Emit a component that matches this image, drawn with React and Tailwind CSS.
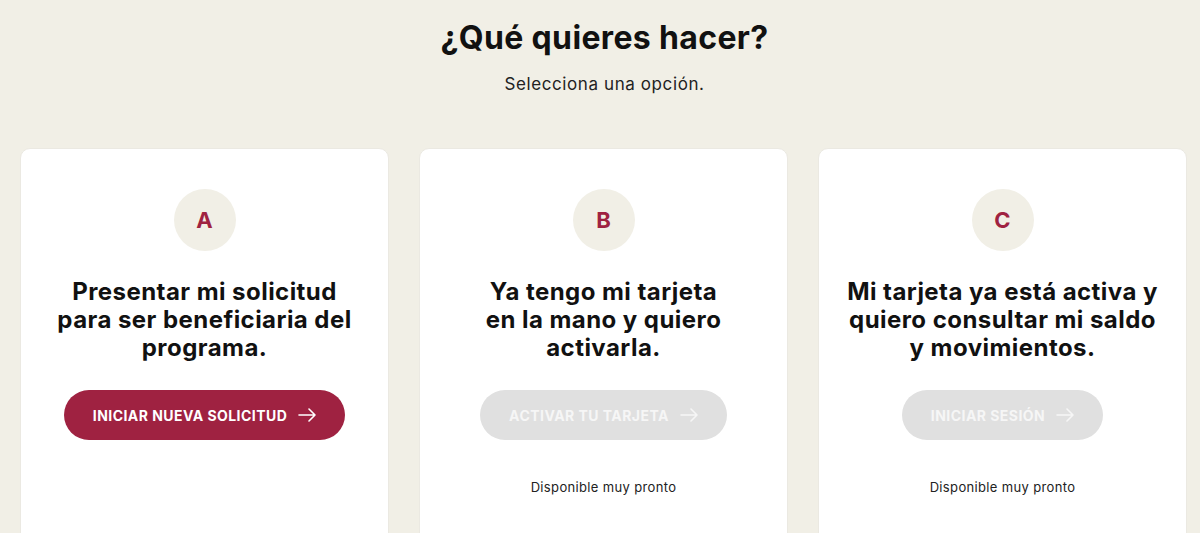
import React from "react";

function Arrow({ className }) {
  return (
    <svg className={className} width="18" height="14" viewBox="0 0 18 14" fill="none" stroke="currentColor" strokeWidth="1.6" strokeLinecap="round" strokeLinejoin="round">
      <path d="M1 7h16M11 1l6 6-6 6" />
    </svg>
  );
}

function Card({ letter, lines, button, active, note }) {
  return (
    <div className="bg-white rounded-[10px] border border-[#ebe9e2] h-[400px] flex flex-col items-center pt-[40px]">
      <div className="w-[62px] h-[62px] rounded-full bg-[#f1efe6] flex items-center justify-center text-[#9f2241] text-[22px] font-bold">
        {letter}
      </div>
      <h2 className="mt-[27px] text-[24px] leading-[28px] font-bold tracking-[0.45px] text-[#111] text-center">
        {lines.map((l, i) => (
          <div key={i}>{l}</div>
        ))}
      </h2>
      <button
        className={
          active
            ? "mt-[28px] h-[50px] px-[29px] rounded-full bg-[#9f2241] text-white text-[14px] font-bold tracking-[0.45px] uppercase flex items-center gap-[11px]"
            : "mt-[28px] h-[50px] px-[29px] rounded-full bg-[#e0e0e0] text-[#f6f6f6] text-[14px] font-bold tracking-[0.45px] uppercase flex items-center gap-[11px]"
        }
      >
        <span>{button}</span>
        <Arrow />
      </button>
      {note && <div className="mt-[38px] text-[13px] leading-[18px] tracking-[0.35px] text-[#222]">{note}</div>}
    </div>
  );
}

export default function App() {
  return (
    <div className="w-[1200px] h-[533px] overflow-hidden bg-[#f1efe6]" style={{ fontFamily: "Inter, 'Noto Sans', sans-serif" }}>
      <div className="pt-[18px] pl-[9px] text-center">
        <h1 className="text-[32px] leading-[40px] font-bold tracking-[0.35px] text-[#111]">¿Qué quieres hacer?</h1>
        <p className="mt-[16px] text-[17px] leading-[20px] tracking-[0.6px] text-[#222]">Selecciona una opción.</p>
      </div>
      <div className="mt-[54px] px-[20px] grid grid-cols-[369px_369px_369px] gap-[30px]">
        <Card
          letter="A"
          lines={["Presentar mi solicitud", "para ser beneficiaria del", "programa."]}
          button="Iniciar nueva solicitud"
          active
        />
        <Card
          letter="B"
          lines={["Ya tengo mi tarjeta", "en la mano y quiero", "activarla."]}
          button="Activar tu tarjeta"
          note="Disponible muy pronto"
        />
        <Card
          letter="C"
          lines={["Mi tarjeta ya está activa y", "quiero consultar mi saldo", "y movimientos."]}
          button="Iniciar sesión"
          note="Disponible muy pronto"
        />
      </div>
    </div>
  );
}
